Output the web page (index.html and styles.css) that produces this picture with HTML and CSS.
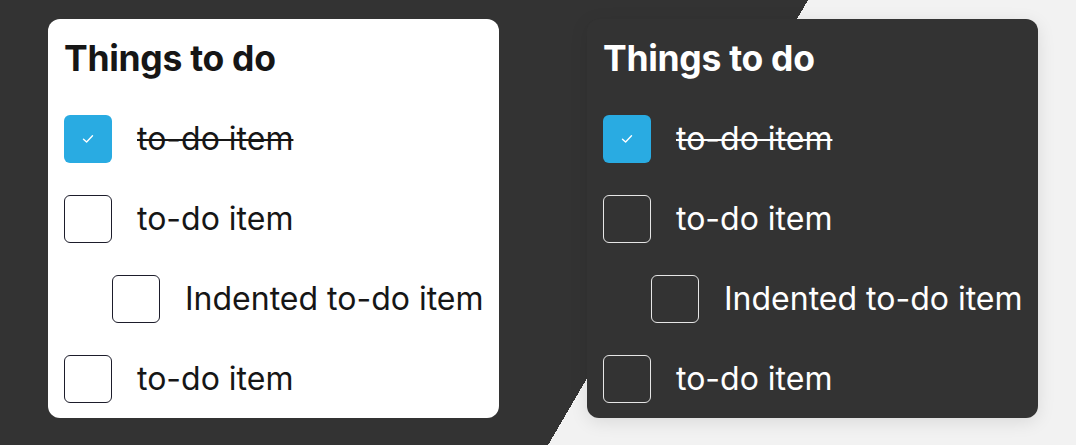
FILE: index.html
```html
<!DOCTYPE html>
<html lang="en">
<head>
<meta charset="utf-8">
<title>Things to do</title>
<link rel="stylesheet" href="styles.css">
</head>
<body>
<div class="stage">
  <section class="card card-light">
    <h2 class="title">Things to do</h2>
    <ul class="list">
      <li class="item done">
        <span class="box checked"><svg viewBox="0 0 12 10" width="12" height="10"><polyline points="1.5,5.2 4.6,8 10.5,1.8" fill="none" stroke="#fff" stroke-width="1.4" stroke-linecap="round" stroke-linejoin="round"/></svg></span>
        <span class="label">to-do item</span>
      </li>
      <li class="item"><span class="box"></span><span class="label">to-do item</span></li>
      <li class="item indent"><span class="box"></span><span class="label">Indented to-do item</span></li>
      <li class="item"><span class="box"></span><span class="label">to-do item</span></li>
    </ul>
  </section>
  <section class="card card-dark">
    <h2 class="title">Things to do</h2>
    <ul class="list">
      <li class="item done">
        <span class="box checked"><svg viewBox="0 0 12 10" width="12" height="10"><polyline points="1.5,5.2 4.6,8 10.5,1.8" fill="none" stroke="#fff" stroke-width="1.4" stroke-linecap="round" stroke-linejoin="round"/></svg></span>
        <span class="label">to-do item</span>
      </li>
      <li class="item"><span class="box"></span><span class="label">to-do item</span></li>
      <li class="item indent"><span class="box"></span><span class="label">Indented to-do item</span></li>
      <li class="item"><span class="box"></span><span class="label">to-do item</span></li>
    </ul>
  </section>
</div>
</body>
</html>
```
FILE: styles.css
```css
html, body {
  margin: 0;
  padding: 0;
}
body {
  font-family: "Inter", "Liberation Sans", sans-serif;
}
.stage {
  box-sizing: border-box;
  width: 1076px;
  height: 445px;
  display: flex;
  gap: 88px;
  padding: 19px 38px 27px 48px;
  background: linear-gradient(120.3deg, #333333 697.7px, #f2f2f2 697.7px);
}
.card {
  box-sizing: border-box;
  flex: 0 0 451px;
  width: 451px;
  height: 399px;
  border-radius: 12px;
  padding: 14px 16px 15px 16px;
  display: flex;
  flex-direction: column;
}
.card-light {
  background: #ffffff;
  color: #161616;
}
.card-dark {
  background: #333333;
  color: #ffffff;
  box-shadow: 0 4px 18px rgba(0, 0, 0, 0.10);
}
.title {
  margin: 0;
  font-size: 35.5px;
  font-weight: 700;
  line-height: 52px;
  letter-spacing: -0.3px;
  white-space: nowrap;
}
.list {
  list-style: none;
  margin: 30px 0 0 0;
  padding: 0;
  display: flex;
  flex-direction: column;
  gap: 32px;
}
.item {
  display: flex;
  align-items: center;
  gap: 25px;
  height: 48px;
}
.item.indent {
  margin-left: 48px;
}
.box {
  box-sizing: border-box;
  flex: 0 0 48px;
  width: 48px;
  height: 48px;
  border-radius: 6px;
  display: flex;
  align-items: center;
  justify-content: center;
}
.card-light .box {
  border: 1px solid #1d1d2b;
}
.card-dark .box {
  border: 1px solid #e6e6e6;
}
.box.checked,
.card-light .box.checked,
.card-dark .box.checked {
  background: #29abe2;
  border: none;
}
.label {
  flex: 0 0 auto;
  font-size: 32px;
  font-weight: 400;
  line-height: 48px;
  white-space: nowrap;
}
.done .label {
  text-decoration: line-through;
  text-decoration-thickness: 2px;
}
```
